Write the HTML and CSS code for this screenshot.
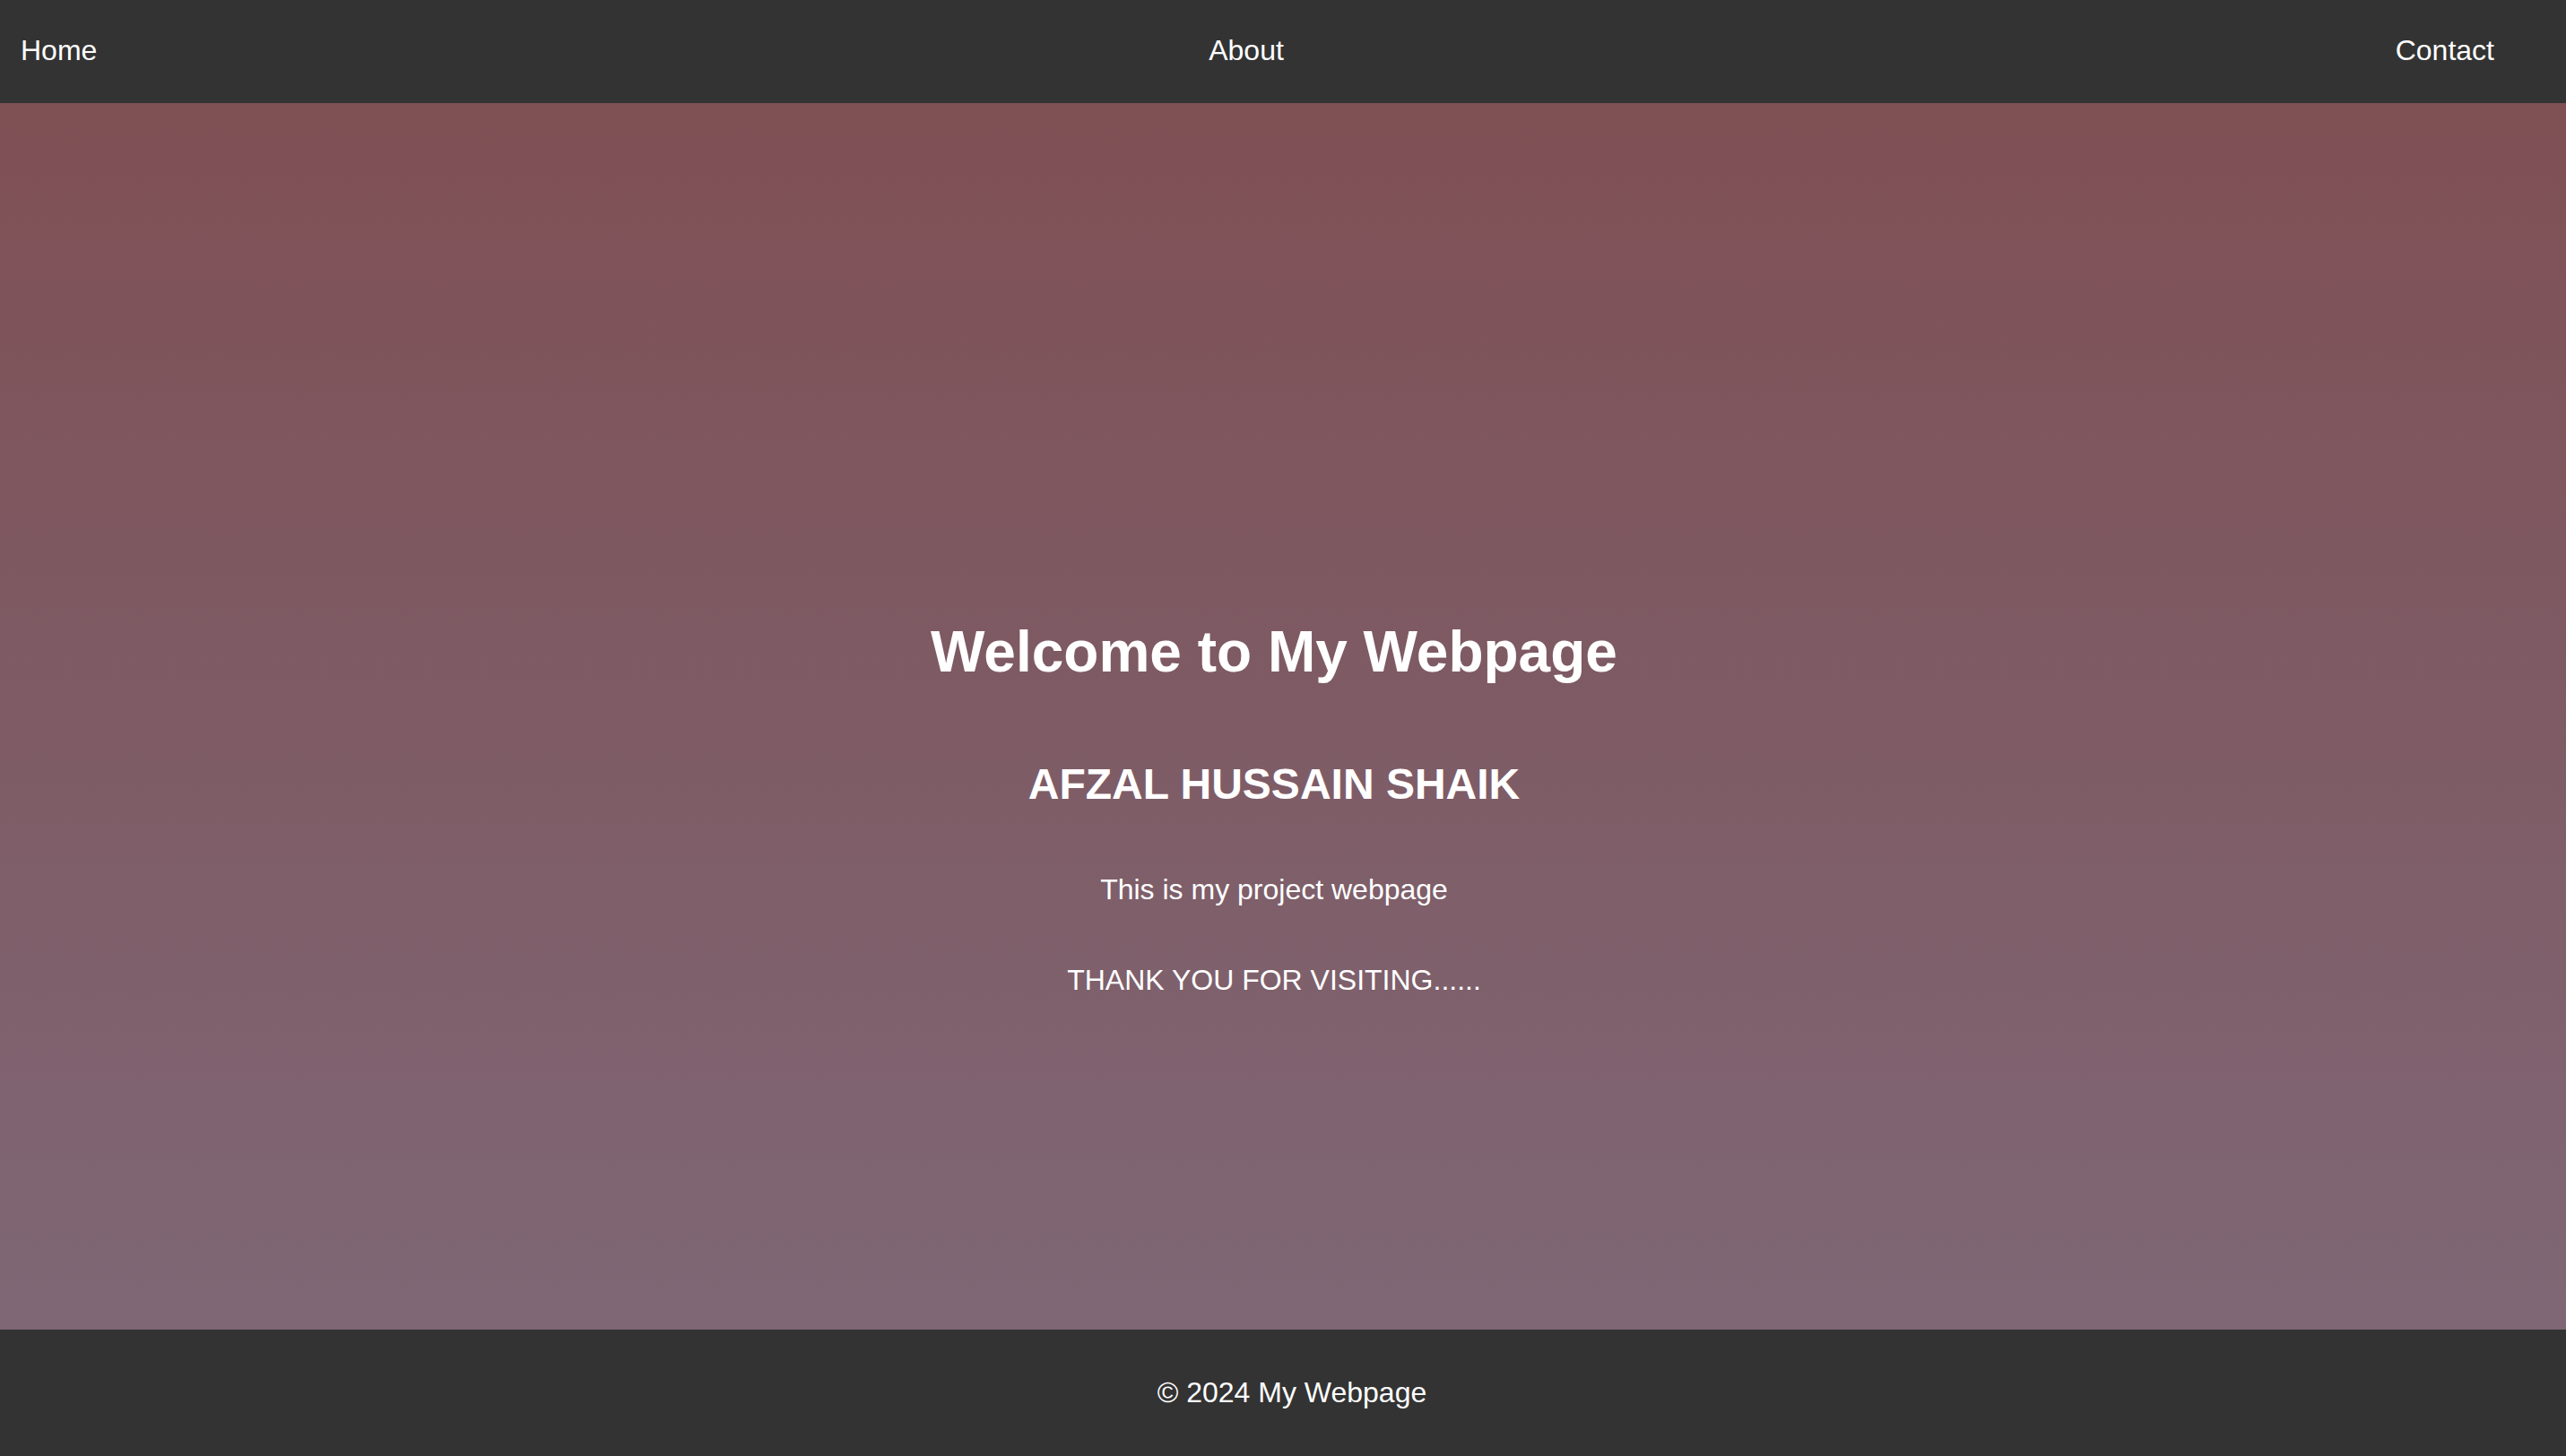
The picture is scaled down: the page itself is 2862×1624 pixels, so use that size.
FILE: index.html
```html
<!DOCTYPE html>
<html lang="en">
<head>
<meta charset="utf-8">
<title>My Webpage</title>
<link rel="stylesheet" href="styles.css">
</head>
<body>
<nav class="nav">
  <ul class="nav-list">
    <li><a class="nav-link" href="#">Home</a></li>
    <li><a class="nav-link" href="#">About</a></li>
    <li><a class="nav-link" href="#">Contact</a></li>
  </ul>
</nav>
<main class="hero">
  <h1 class="hero-title">Welcome to My Webpage</h1>
  <h2 class="hero-name">AFZAL HUSSAIN SHAIK</h2>
  <p class="hero-text">This is my project webpage</p>
  <p class="hero-text">THANK YOU FOR VISITING......</p>
</main>
<footer class="footer">
  <p class="footer-text">© 2024 My Webpage</p>
</footer>
</body>
</html>
```
FILE: styles.css
```css
html, body {
  margin: 0;
  padding: 0;
}
body {
  font-family: "Liberation Sans", Arial, Helvetica, sans-serif;
  font-size: 32px;
  color: #ffffff;
  min-height: 100vh;
  display: flex;
  flex-direction: column;
  background: #333333;
}
.nav {
  background: #333333;
  height: 115px;
  display: flex;
  align-items: center;
  padding: 0 80px 0 23px;
}
.nav-list {
  list-style: none;
  margin: 0;
  padding: 0;
  width: 100%;
  display: flex;
  justify-content: space-between;
  align-items: center;
}
.nav-link {
  color: #ffffff;
  text-decoration: none;
  display: block;
  line-height: 37px;
  position: relative;
  top: -1px;
}
.hero {
  flex: 1;
  display: flex;
  flex-direction: column;
  justify-content: center;
  align-items: center;
  text-align: center;
  padding: 192px 20px 0 0;
  background: linear-gradient(to bottom, #7f5054 0%, #7e5962 40%, #7f6775 100%);
}
.hero-title {
  font-size: 64px;
  font-weight: bold;
  margin: 43px 0;
}
.hero-name {
  font-size: 48px;
  font-weight: bold;
  margin: 40px 0;
}
.hero-text {
  font-size: 32px;
  margin: 32px 0;
}
.footer {
  background: #333333;
  height: 141px;
  display: flex;
  align-items: center;
  justify-content: center;
  padding-left: 20px;
}
.footer-text {
  margin: 0;
}
```
